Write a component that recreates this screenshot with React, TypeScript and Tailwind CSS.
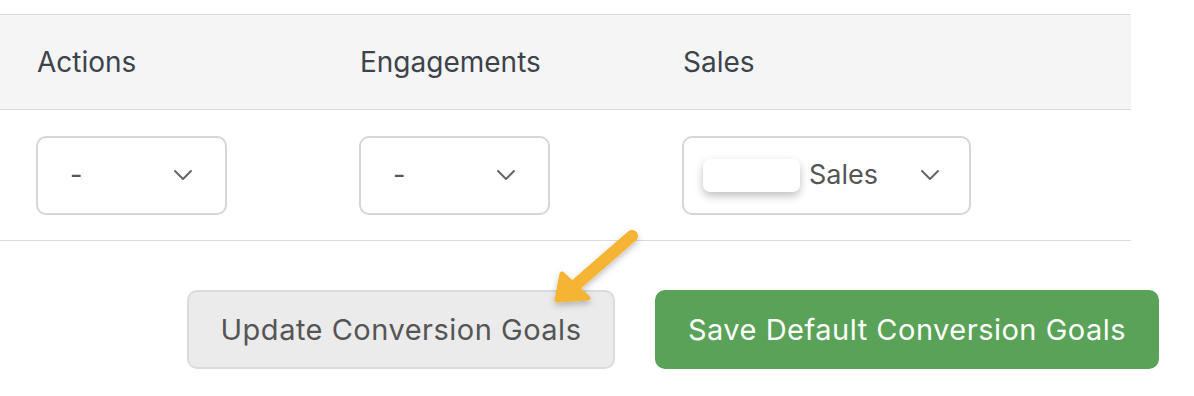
import React from "react";

const columns = [
  { label: "Actions", value: "-", width: "w-[191px]" },
  { label: "Engagements", value: "-", width: "w-[191px]" },
  { label: "Sales", value: "Sales", width: "w-[289px]", badge: true },
];

function Chevron() {
  return (
    <svg width="20" height="12" viewBox="0 0 20 12" fill="none" className="shrink-0">
      <polyline points="2,2 10,10 18,2" stroke="#666" strokeWidth="2" strokeLinecap="round" strokeLinejoin="round" />
    </svg>
  );
}

function SelectBox({ value, width, badge }: { value: string; width: string; badge?: boolean }) {
  return (
    <div
      className={`${width} h-[79px] flex items-center justify-between rounded-[10px] border-2 border-[#d6d6d6] bg-white ${
        badge ? "pl-[19px] pr-[29px]" : "pl-[32px] pr-[32px]"
      }`}
    >
      <div className="flex items-center gap-[9px]">
        {badge && <span className="w-[97px] h-[33px] rounded-[7px] bg-white shadow-[0_4px_8px_rgba(0,0,0,0.25)]" />}
        <span className="text-[27px] text-[#555]">{value}</span>
      </div>
      <Chevron />
    </div>
  );
}

export default function App() {
  return (
    <div className="relative w-[1194px] h-[396px] bg-white" style={{ fontFamily: "Inter, 'Noto Sans', sans-serif" }}>
      <div className="pt-[14px] w-[1131px]">
        {/* header */}
        <div className="flex h-[96px] items-center bg-[#f5f5f5] border-y border-[#d8dbdf] pl-[37px]">
          {columns.map((c) => (
            <div key={c.label} className="w-[323px] text-[28px] leading-none text-[#3d434b]">
              {c.label}
            </div>
          ))}
        </div>
        {/* row */}
        <div className="flex h-[131px] items-center border-b border-[#d8dbdf] pl-[36px]">
          {columns.map((c) => (
            <div key={c.label} className="w-[323px]">
              <SelectBox value={c.value} width={c.width} badge={c.badge} />
            </div>
          ))}
        </div>
      </div>

      <div className="flex justify-end gap-[40px] pr-[35px] mt-[49px]">
        <button className="w-[428px] h-[79px] rounded-[10px] border-2 border-[#d9dbde] bg-[#ebebeb] text-[29px] tracking-[0.5px] text-[#555]">
          Update Conversion Goals
        </button>
        <button className="w-[504px] h-[79px] rounded-[10px] bg-[#59a257] text-[29px] tracking-[0.5px] text-white">
          Save Default Conversion Goals
        </button>
      </div>

      {/* annotation arrow */}
      <svg className="absolute left-0 top-0 pointer-events-none" width="1194" height="396">
        <defs>
          <filter id="sh" x="-20%" y="-20%" width="140%" height="140%">
            <feDropShadow dx="0" dy="3" stdDeviation="3" floodColor="#000" floodOpacity="0.25" />
          </filter>
        </defs>
        <g filter="url(#sh)">
          <line x1="632" y1="236" x2="570" y2="290" stroke="#f6b434" strokeWidth="12" strokeLinecap="round" />
          <polygon points="557,300 562,274 588,298" fill="#f6b434" stroke="#f6b434" strokeWidth="5" strokeLinejoin="round" />
        </g>
      </svg>
    </div>
  );
}
